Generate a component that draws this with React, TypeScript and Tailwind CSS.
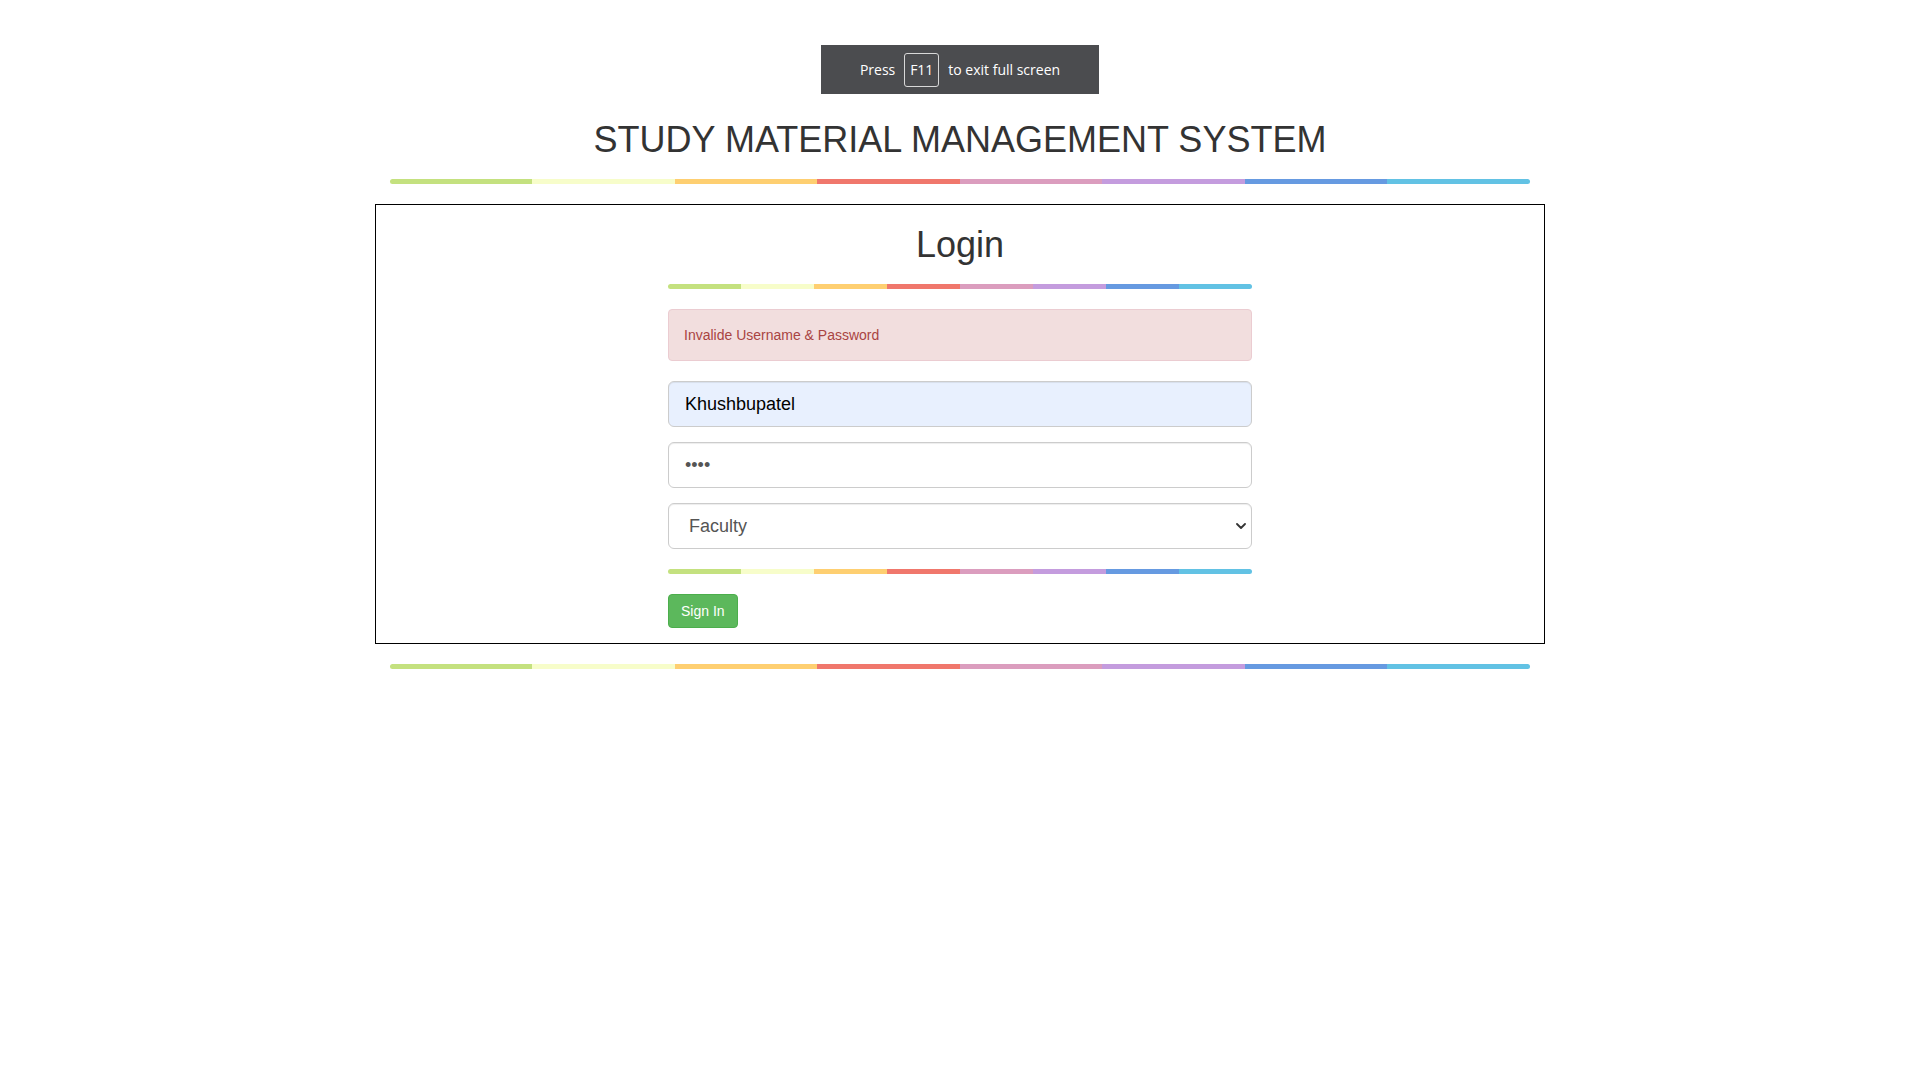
import React from "react";

const BAR =
  "h-[5px] rounded-[5px] bg-[linear-gradient(to_right,#c4e17f_0,#c4e17f_12.5%,#f7fdca_12.5%,#f7fdca_25%,#fecf71_25%,#fecf71_37.5%,#f0776c_37.5%,#f0776c_50%,#db9dbe_50%,#db9dbe_62.5%,#c49cde_62.5%,#c49cde_75%,#669ae1_75%,#669ae1_87.5%,#62c2e4_87.5%,#62c2e4_100%)]";

export default function App() {
  return (
    <div className="relative min-h-screen bg-white font-['Liberation_Sans',Arial,sans-serif] text-[#333]">
      {/* fullscreen notice overlay */}
      <div className="absolute left-[821px] top-[45px] flex h-[49px] w-[278px] items-center justify-center gap-[9px] bg-[#4b4c4f] font-['Open_Sans','Noto_Sans',sans-serif] text-[14px] text-white">
        <span>Press</span>
        <span className="flex h-[34px] w-[35px] items-center justify-center rounded-[3px] border border-[#d8d8d8]">
          F11
        </span>
        <span>to exit full screen</span>
      </div>

      <div className="mx-auto w-[1170px] pt-[120px]">
        <h1 className="text-center text-[36px] font-normal leading-[40px]">
          STUDY MATERIAL MANAGEMENT SYSTEM
        </h1>
        <div className={`mx-[15px] mt-[19px] ${BAR}`} />

        <div className="mt-[20px] border border-black">
          <div className="mx-auto w-[584px] pb-[15px] pt-[20px]">
            <h1 className="text-center text-[36px] font-normal leading-[40px]">Login</h1>
            <div className={`mt-[19px] ${BAR}`} />

            <div className="mt-[20px] rounded-[4px] border border-[#ebccd1] bg-[#f2dede] p-[15px] text-[14px] leading-[20px] text-[#a94442]">
              Invalide Username &amp; Password
            </div>

            <input
              readOnly
              value="Khushbupatel"
              className="mt-[20px] block h-[46px] w-full rounded-[6px] border border-[#ccc] bg-[#e8f0fe] px-[16px] text-[18px] text-black shadow-[inset_0_1px_1px_rgba(0,0,0,0.075)] outline-none"
            />
            <input
              readOnly
              value="••••"
              className="mt-[15px] block h-[46px] w-full rounded-[6px] border border-[#ccc] bg-white px-[16px] text-[18px] text-[#555] shadow-[inset_0_1px_1px_rgba(0,0,0,0.075)] outline-none"
            />
            <div className="relative mt-[15px]">
              <select
                defaultValue="Faculty"
                className="block h-[46px] w-full appearance-none rounded-[6px] border border-[#ccc] bg-white pl-[20px] pr-[30px] text-[18px] text-[#555] shadow-[inset_0_1px_1px_rgba(0,0,0,0.075)] outline-none"
              >
                <option>Student</option>
                <option>Faculty</option>
                <option>Admin</option>
              </select>
              <svg
                className="pointer-events-none absolute right-[6px] top-[19px]"
                width="10"
                height="8"
                viewBox="0 0 10 8"
                fill="none"
              >
                <path d="M1 2 L5 6 L9 2" stroke="#333" strokeWidth="1.8" strokeLinecap="round" strokeLinejoin="round" />
              </svg>
            </div>

            <div className={`mt-[20px] ${BAR}`} />

            <button className="mt-[20px] h-[34px] rounded-[4px] border border-[#4cae4c] bg-[#5cb85c] px-[12px] text-[14px] leading-[20px] text-white">
              Sign In
            </button>
          </div>
        </div>

        <div className={`mx-[15px] mt-[20px] ${BAR}`} />
      </div>
    </div>
  );
}
